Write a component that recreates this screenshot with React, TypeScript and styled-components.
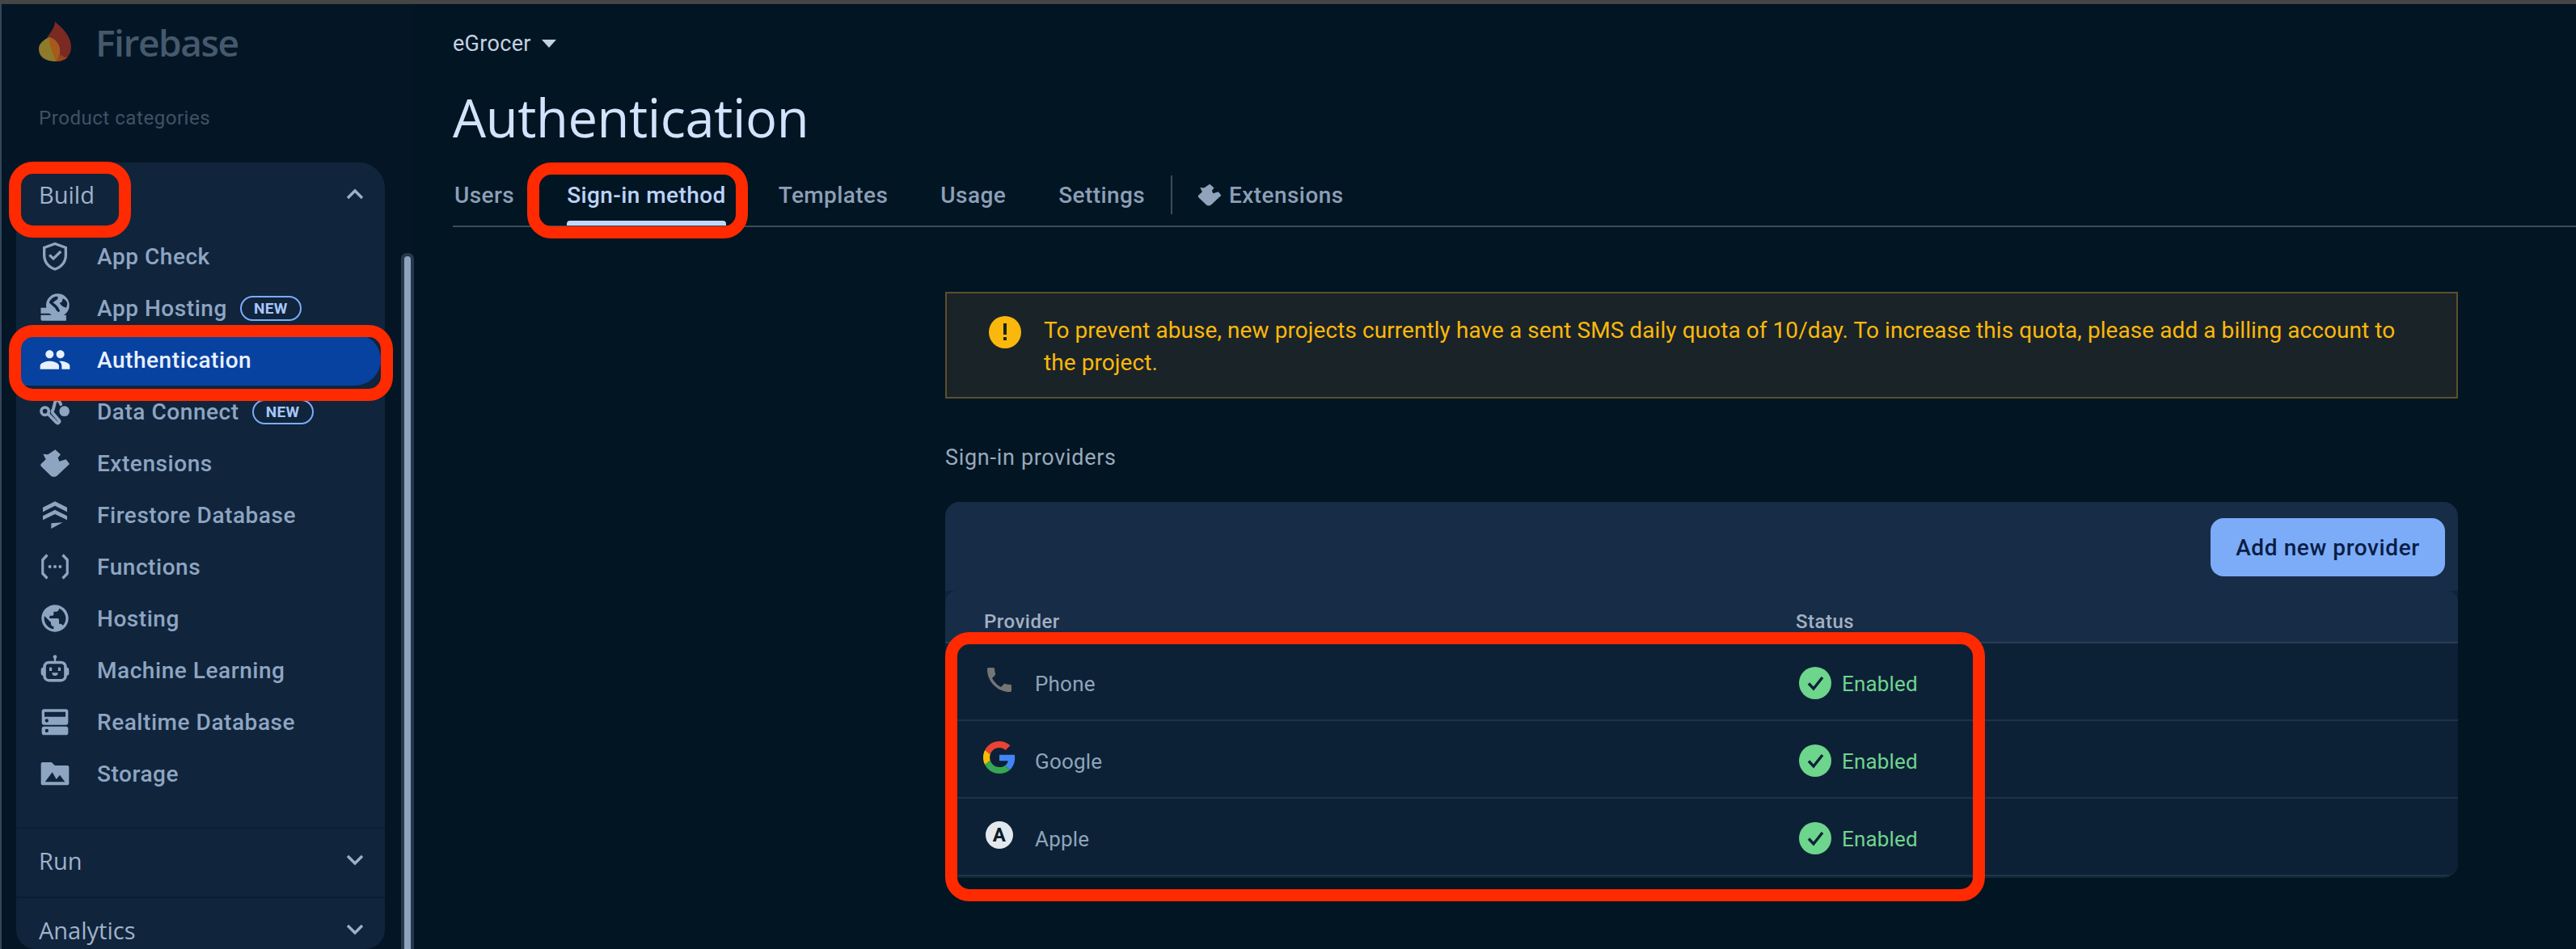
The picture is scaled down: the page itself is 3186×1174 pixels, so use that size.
import React from "react";
import styled, { createGlobalStyle } from "styled-components";

const Global = createGlobalStyle`
  html, body { margin: 0; padding: 0; background: #021523; }
  * { box-sizing: border-box; }
  #root { width: 3186px; height: 1174px; overflow: hidden; }
`;

const Page = styled.div`
  position: relative;
  width: 3186px;
  height: 1174px;
  overflow: hidden;
  display: flex;
  flex-direction: column;
  background: #021523;
  font-family: Roboto, "Liberation Sans", sans-serif;
`;
const TopStrip = styled.div`
  flex: 0 0 5px;
  background: #454545;
`;
const Shell = styled.div`
  flex: 1;
  display: flex;
  min-height: 0;
`;
const Sidebar = styled.aside`
  flex: 0 0 512px;
  display: flex;
  border-left: 2px solid #33475c;
  background: #041626;
`;
const SideColumn = styled.div`
  flex: 0 0 474px;
  padding-left: 18px;
  display: flex;
  flex-direction: column;
`;
const Brand = styled.div`
  height: 94px;
  padding-left: 28px;
  display: flex;
  align-items: center;
  gap: 30px;
`;
const BrandName = styled.span`
  font-family: "Open Sans", sans-serif;
  font-size: 46px;
  font-weight: 600;
  letter-spacing: -1.4px;
  color: #46596c;
`;
const CategoryLabel = styled.div`
  height: 102px;
  padding: 30px 0 0 28px;
  font-size: 24px;
  line-height: 34px;
  letter-spacing: 0.55px;
  color: #3f5266;
`;
const Panel = styled.nav`
  flex: 1;
  min-height: 0;
  background: #10243c;
  border-radius: 32px 32px 24px 24px;
  display: flex;
  flex-direction: column;
  overflow: hidden;
`;
const SectionHead = styled.div<{ $divided?: boolean }>`
  flex: 0 0 ${(p) => (p.$divided ? "86px" : "84px")};
  padding: 0 26px 6px 28px;
  display: flex;
  align-items: center;
  justify-content: space-between;
  font-family: "Open Sans", sans-serif;
  font-size: 29px;
  color: #a0b2ca;
  border-top: ${(p) => (p.$divided ? "2px solid #0b1d32" : "none")};
`;
const NavList = styled.div`
  flex: 0 0 auto;
  display: flex;
  flex-direction: column;
  padding-bottom: 34px;
`;
const NavRow = styled.div<{ $active?: boolean }>`
  height: 64px;
  margin-right: 5px;
  padding-left: 28px;
  display: flex;
  align-items: center;
  gap: 32px;
  border-radius: 0 32px 32px 0;
  background: ${(p) => (p.$active ? "#0842a0" : "transparent")};
  color: ${(p) => (p.$active ? "#e8f0fe" : "#8ea5c1")};
  font-size: 28px;
  font-weight: 500;
  letter-spacing: 0.55px;
  white-space: nowrap;
`;
const NavIcon = styled.svg`
  flex: 0 0 40px;
  width: 40px;
  height: 40px;
  fill: currentColor;
`;
const NewBadge = styled.span`
  margin-left: -16px;
  width: 76px;
  height: 31px;
  border: 2px solid #7cacf8;
  border-radius: 16px;
  display: flex;
  align-items: center;
  justify-content: center;
  font-size: 19px;
  font-weight: 700;
  letter-spacing: 0.3px;
  color: #a8c7fa;
`;
const Chevron = styled.svg`
  width: 22px;
  height: 14px;
  fill: none;
  stroke: #9cb0ca;
  stroke-width: 3.4;
`;
const ScrollRail = styled.div`
  flex: 0 0 36px;
  padding: 308px 0 0 20px;
  display: flex;
`;
const ScrollTrack = styled.div`
  width: 16px;
  background: #27384a;
  padding: 0 4px;
  border-radius: 7px 7px 0 0;
  display: flex;
`;
const ScrollThumb = styled.div`
  flex: 1;
  background: #8da2bd;
  border-radius: 4px 4px 0 0;
  margin-top: 4px;
`;
const Main = styled.main`
  flex: 1;
  min-width: 0;
  display: flex;
  flex-direction: column;
`;
const Header = styled.header`
  padding-left: 48px;
`;
const ProjectRow = styled.div`
  height: 98px;
  display: flex;
  align-items: center;
  gap: 13px;
  font-size: 27px;
  letter-spacing: 0.3px;
  color: #c4d1e0;
`;
const Caret = styled.span`
  width: 0;
  height: 0;
  border-left: 9px solid transparent;
  border-right: 9px solid transparent;
  border-top: 10px solid #c4d1e0;
`;
const Title = styled.h1`
  margin: 0;
  height: 90px;
  font-family: "Open Sans", sans-serif;
  font-size: 65px;
  font-weight: 400;
  line-height: 84px;
  letter-spacing: -0.4px;
  color: #d3e3fd;
`;
const TabBar = styled.div`
  height: 88px;
  padding: 10px 0 0 2px;
  display: flex;
  align-items: center;
  border-bottom: 2px solid #3c4b5a;
`;
const Tab = styled.div<{ $active?: boolean }>`
  position: relative;
  height: 76px;
  margin-right: 65px;
  display: flex;
  align-items: center;
  gap: 8px;
  font-size: 28px;
  font-weight: 500;
  letter-spacing: 0.42px;
  color: ${(p) => (p.$active ? "#bcd3f7" : "#8c9fb6")};
  &::after {
    content: "";
    display: ${(p) => (p.$active ? "block" : "none")};
    position: absolute;
    left: 0;
    right: 0;
    bottom: 0;
    height: 6px;
    border-radius: 4px 4px 0 0;
    background: #c2d7f8;
  }
`;
const TabDivider = styled.div`
  width: 2px;
  height: 48px;
  margin: 0 30px 0 -33px;
  background: #3c4b5a;
`;
const TabIcon = styled.svg`
  width: 32px;
  height: 32px;
  fill: #8fa3bb;
`;
const Content = styled.div`
  width: 1871px;
  margin: 80px 0 0 657px;
  display: flex;
  flex-direction: column;
`;
const Banner = styled.div`
  height: 132px;
  padding: 26px 50px 0 52px;
  display: flex;
  gap: 28px;
  background: #1a2328;
  border: 2px solid #5d4f2b;
  font-size: 28px;
  line-height: 40px;
  letter-spacing: 0.07px;
  color: #fbb80c;
`;
const WarnIcon = styled.svg`
  flex: 0 0 40px;
  width: 40px;
  height: 40px;
  margin-top: 2px;
`;
const Subhead = styled.div`
  height: 128px;
  padding-top: 17px;
  display: flex;
  align-items: center;
  font-size: 27px;
  letter-spacing: 0.7px;
  color: #9aa9bc;
`;
const Card = styled.section`
  border-radius: 18px;
  background: #10233a;
  overflow: hidden;
  box-shadow: 0 2px 0 #14283b;
`;
const CardBar = styled.div`
  height: 110px;
  padding: 20px 16px 0 0;
  display: flex;
  justify-content: flex-end;
  align-items: flex-start;
  background: #172c47;
`;
const AddButton = styled.button`
  width: 290px;
  height: 72px;
  padding: 0;
  border: 0;
  border-radius: 16px;
  background: #7cacf8;
  color: #0a1d45;
  font-family: Roboto, sans-serif;
  font-size: 28px;
  font-weight: 500;
  letter-spacing: 0.6px;
`;
const GridRow = styled.div`
  display: grid;
  grid-template-columns: 1004px 1fr;
  align-items: center;
`;
const HeadRow = styled(GridRow)`
  height: 65px;
  padding: 12px 0 0 48px;
  font-size: 24px;
  font-weight: 500;
  letter-spacing: 0.5px;
  color: #a3b1c2;
  background: #172c47;
  border-radius: 14px 14px 0 0;
  border-bottom: 2px solid #293d53;
`;
const BodyRow = styled(GridRow)`
  height: 96px;
  padding: 6px 0 0 47px;
  background: #0d2136;
  border-bottom: 2px solid #1f3348;
`;
const ProviderCell = styled.div`
  display: flex;
  align-items: center;
  gap: 24px;
  font-size: 26px;
  letter-spacing: 0.2px;
  color: #8ea4bb;
`;
const ProviderIconBox = styled.span`
  flex: 0 0 40px;
  width: 40px;
  height: 40px;
  display: flex;
  align-items: center;
  justify-content: center;
  margin-top: -10px;
`;
const ProviderSvg = styled.svg`
  width: 40px;
  height: 40px;
`;
const AppleBadge = styled.span`
  width: 34px;
  height: 34px;
  border-radius: 50%;
  background: #e3e8ee;
  color: #0b1b2b;
  font-size: 24px;
  font-weight: 700;
  line-height: 34px;
  text-align: center;
`;
const StatusCell = styled.div`
  display: flex;
  align-items: center;
  gap: 13px;
  font-size: 26px;
  letter-spacing: 0.15px;
  color: #6fd48e;
`;
const CheckBadge = styled.svg`
  flex: 0 0 40px;
  width: 40px;
  height: 40px;
  margin: -2px 0 0 5px;
`;
const Annotation = styled.div<{ $x: number; $y: number; $w: number; $h: number; $r: number }>`
  position: absolute;
  left: ${(p) => p.$x}px;
  top: ${(p) => p.$y}px;
  width: ${(p) => p.$w}px;
  height: ${(p) => p.$h}px;
  border: 15px solid #ff2a00;
  border-radius: ${(p) => p.$r}px;
  pointer-events: none;
`;

const Flame = () => (
  <svg width="40" height="50" viewBox="0 0 40 50">
    <path d="M20 0C29 7 40 18 40 31 40 42 32 49 22 49 10 49 6 36 8 25 11 15 19 11 20 0Z" fill="#7a2a22" />
    <path d="M13 19C21 21 27 29 26 38 25 44 23 47 22 49 10 49 0 45 0 33 0 27 6 22 13 19Z" fill="#8d7a2a" />
    <path d="M13 19C21 21 27 29 26 38 25 43 24 46 21 49 19 40 12 30 13 19Z" fill="#a8591c" />
    <path d="M21 49C24 46 26 43 27 40 30 44 33 45 36 43 33 47 27 49 21 49Z" fill="#96481c" />
  </svg>
);

const puzzle = "M3.2 5.2L6.8 5.6 12.2 2l4 3.6-2 2.4 1 2.6 5-1.4 2.6 3.4-9.4 8.8Q11 22.8 9 21.4L1.6 14.2Q1 13.4 1.6 12.6L5.2 9.2Z";

const ic = {
  check: (
    <>
      <path fillRule="evenodd" d="M12 1.6l9 3.3v6.4c0 5.4-3.7 10.1-9 11.3-5.3-1.2-9-5.9-9-11.3V4.9l9-3.3zm0 2.2L5 6.3v5c0 4.3 2.9 8.1 7 9.2 4.1-1.1 7-4.9 7-9.2v-5l-7-2.5z" />
      <path d="M10.8 15.2l-3.6-3.5 1.4-1.4 2.2 2.1 4.8-4.7 1.4 1.4-6.2 6.1z" />
    </>
  ),
  appHosting: (
    <>
      <path fillRule="evenodd" d="M14 1.4a8.6 8.6 0 1 1 0 17.2 8.6 8.6 0 0 1 0-17.2zm-1 2.1c-2.2.3-4.6 2-5.3 4.6l4.5 4 .8 1.7 1.7 1.4 1-1-1.3-2.6-1.6-1.8L10.5 8l2-1.6 1.4-.9.3-1.9-1.2-.1zm4.8 1.4-.6 2.4-1.8 1.3 2.2 2.2 2.7 1c.7-1.2.9-2.5.7-3.8-.3-1.2-1.7-2.4-3.2-3.1z" />
      <path d="M1.5 11.8h4.6c.5 2 1.3 3 2.7 4.2H1.5v-4.2zm0 5.5h18.8v4.1H2.5a1 1 0 0 1-1-1v-3.1z" />
    </>
  ),
  auth: (
    <path d="M16 11c1.66 0 2.99-1.34 2.99-3S17.66 5 16 5c-1.66 0-3 1.34-3 3s1.34 3 3 3zm-8 0c1.66 0 2.99-1.34 2.99-3S9.66 5 8 5C6.34 5 5 6.34 5 8s1.34 3 3 3zm0 2c-2.33 0-7 1.17-7 3.5V19h14v-2.5c0-2.33-4.67-3.5-7-3.5zm8 0c-.29 0-.62.02-.97.05 1.16.84 1.97 1.97 1.97 3.45V19h6v-2.5c0-2.33-4.67-3.5-7-3.5z" />
  ),
  dataConnect: (
    <>
      <path fill="none" stroke="currentColor" strokeWidth="2.3" strokeLinecap="round" d="M6.8 13.8l6.2 6.4c1.2 1.2 3-.4 1.9-1.7l-4.4-5.2c-.9-1-.5-2 .2-2.8l1.4-5.6c.5-1.5 2.5-1.4 3.2-.2l1 2" />
      <circle cx="4.6" cy="11.8" r="2.8" fill="none" stroke="currentColor" strokeWidth="2.2" />
      <circle cx="19" cy="11.8" r="3.8" />
    </>
  ),
  extensions: <path d={puzzle} />,
  firestore: (
    <>
      <path d="M12 2l9 4.4v3.3L12 5.3 3 9.7V6.4L12 2z" />
      <path d="M12 8.3l9 4.4v3L12 11.4 3 15.7v-3L12 8.3z" />
      <path d="M9.2 18.2l8.6-.7-8.6 4.7v-4z" />
    </>
  ),
  functions: (
    <>
      <path d="M5.6 2.6L7 4.1 3.8 7.5v9l3.2 3.4-1.4 1.5L1.9 17.5V6.5l3.7-3.9zM18.4 2.6L17 4.1l3.2 3.4v9L17 19.9l1.4 1.5 3.7-3.9V6.5l-3.7-3.9z" />
      <circle cx="8.2" cy="12" r="1.2" />
      <circle cx="12" cy="12" r="1.2" />
      <circle cx="15.8" cy="12" r="1.2" />
    </>
  ),
  hosting: (
    <path d="M12 2C6.48 2 2 6.48 2 12s4.48 10 10 10 10-4.48 10-10S17.52 2 12 2zm-1 17.93c-3.95-.49-7-3.85-7-7.93 0-.62.08-1.21.21-1.79L9 15v1c0 1.1.9 2 2 2v1.93zm6.9-2.54c-.26-.81-1-1.39-1.9-1.39h-1v-3c0-.55-.45-1-1-1H8v-2h2c.55 0 1-.45 1-1V7h2c1.1 0 2-.9 2-2v-.41c2.93 1.19 5 4.06 5 7.41 0 2.08-.8 3.97-2.1 5.39z" />
  ),
  robot: (
    <>
      <circle cx="12" cy="2.2" r="1.4" />
      <rect x="11.3" y="2.5" width="1.4" height="3.2" />
      <path fillRule="evenodd" d="M7.5 5.2h9a4.4 4.4 0 0 1 4.4 4.4v.4H21a1.5 1.5 0 0 1 1.4 1.5v3a1.5 1.5 0 0 1-1.4 1.5h-.1v.3a4.4 4.4 0 0 1-4.4 4.4h-9a4.4 4.4 0 0 1-4.4-4.4V16H3a1.5 1.5 0 0 1-1.4-1.5v-3A1.5 1.5 0 0 1 3 10h.1v-.4a4.4 4.4 0 0 1 4.4-4.4zm0 2.2a2.2 2.2 0 0 0-2.2 2.2v6.8a2.2 2.2 0 0 0 2.2 2.2h9a2.2 2.2 0 0 0 2.2-2.2V9.6a2.2 2.2 0 0 0-2.2-2.2h-9z" />
      <rect x="7.8" y="10" width="1.9" height="2.6" />
      <rect x="14.3" y="10" width="1.9" height="2.6" />
      <path d="M9.8 14h4.4a2.2 2.2 0 0 1-4.4 0z" />
    </>
  ),
  realtime: (
    <path fillRule="evenodd" d="M3.8 2.6h16.4c.9 0 1.6.7 1.6 1.6v8.4c0 .9-.7 1.6-1.6 1.6H3.8c-.9 0-1.6-.7-1.6-1.6V4.2c0-.9.7-1.6 1.6-1.6zm.4 2v3.6h15.6V4.6H4.2zm1.7 5.2a1.3 1.3 0 1 0 0 2.6 1.3 1.3 0 0 0 0-2.6zM3.8 15.4h16.4c.9 0 1.6.7 1.6 1.6v3.2c0 .9-.7 1.6-1.6 1.6H3.8c-.9 0-1.6-.7-1.6-1.6V17c0-.9.7-1.6 1.6-1.6zm2.1 1.9a1.3 1.3 0 1 0 0 2.6 1.3 1.3 0 0 0 0-2.6z" />
  ),
  storage: (
    <path fillRule="evenodd" d="M2.8 3.6h6.6L12 6h9.2c.7 0 1.2.5 1.2 1.2v12.2c0 .7-.5 1.2-1.2 1.2H2.8c-.7 0-1.2-.5-1.2-1.2V4.8c0-.7.5-1.2 1.2-1.2zm7.2 7.4l-5.4 7.2h14.8l-3.8-5.2-2.6 3.2L10 11z" />
  ),
};

const rows: { label: string; icon: keyof typeof ic; isNew?: boolean; active?: boolean }[] = [
  { label: "App Check", icon: "check" },
  { label: "App Hosting", icon: "appHosting", isNew: true },
  { label: "Authentication", icon: "auth", active: true },
  { label: "Data Connect", icon: "dataConnect", isNew: true },
  { label: "Extensions", icon: "extensions" },
  { label: "Firestore Database", icon: "firestore" },
  { label: "Functions", icon: "functions" },
  { label: "Hosting", icon: "hosting" },
  { label: "Machine Learning", icon: "robot" },
  { label: "Realtime Database", icon: "realtime" },
  { label: "Storage", icon: "storage" },
];

const ChevronUp = () => (
  <Chevron viewBox="0 0 22 14">
    <path d="M2 12l9-9 9 9" />
  </Chevron>
);
const ChevronDown = () => (
  <Chevron viewBox="0 0 22 14">
    <path d="M2 2l9 9 9-9" />
  </Chevron>
);

const Enabled = () => (
  <StatusCell>
    <CheckBadge viewBox="0 0 40 40">
      <circle cx="20" cy="20" r="20" fill="#6dd58c" />
      <path d="M12 20.5l6 6.5 11-14" fill="none" stroke="#0d2136" strokeWidth="3.4" />
    </CheckBadge>
    Enabled
  </StatusCell>
);

export default function App() {
  return (
    <Page>
      <Global />
      <TopStrip />
      <Shell>
        <Sidebar>
          <SideColumn>
            <Brand>
              <Flame />
              <BrandName>Firebase</BrandName>
            </Brand>
            <CategoryLabel>Product categories</CategoryLabel>
            <Panel>
              <SectionHead>
                Build
                <ChevronUp />
              </SectionHead>
              <NavList>
                {rows.map((r) => (
                  <NavRow key={r.label} $active={r.active}>
                    <NavIcon viewBox="0 0 24 24">{ic[r.icon]}</NavIcon>
                    {r.label}
                    {r.isNew && <NewBadge>NEW</NewBadge>}
                  </NavRow>
                ))}
              </NavList>
              <SectionHead $divided>
                Run
                <ChevronDown />
              </SectionHead>
              <SectionHead $divided>
                Analytics
                <ChevronDown />
              </SectionHead>
            </Panel>
          </SideColumn>
          <ScrollRail>
            <ScrollTrack>
              <ScrollThumb />
            </ScrollTrack>
          </ScrollRail>
        </Sidebar>
        <Main>
          <Header>
            <ProjectRow>
              eGrocer
              <Caret />
            </ProjectRow>
            <Title>Authentication</Title>
            <TabBar>
              <Tab>Users</Tab>
              <Tab $active>Sign-in method</Tab>
              <Tab>Templates</Tab>
              <Tab>Usage</Tab>
              <Tab>Settings</Tab>
              <TabDivider />
              <Tab>
                <TabIcon viewBox="0 0 24 24">{ic.extensions}</TabIcon>
                Extensions
              </Tab>
            </TabBar>
          </Header>
          <Content>
            <Banner>
              <WarnIcon viewBox="0 0 40 40">
                <circle cx="20" cy="20" r="20" fill="#fbb80c" />
                <rect x="18" y="9" width="4" height="14" fill="#1a2328" />
                <rect x="18" y="26" width="4" height="4" fill="#1a2328" />
              </WarnIcon>
              <span>
                To prevent abuse, new projects currently have a sent SMS daily quota of 10/day. To increase this quota, please add a billing account to the project.
              </span>
            </Banner>
            <Subhead>Sign-in providers</Subhead>
            <Card>
              <CardBar>
                <AddButton>Add new provider</AddButton>
              </CardBar>
              <HeadRow>
                <span>Provider</span>
                <span>Status</span>
              </HeadRow>
              <BodyRow>
                <ProviderCell>
                  <ProviderIconBox>
                    <ProviderSvg viewBox="0 0 24 24">
                      <path fill="#757575" d="M6.62 10.79c1.44 2.83 3.76 5.14 6.59 6.59l2.2-2.2c.27-.27.67-.36 1.02-.24 1.12.37 2.33.57 3.57.57.55 0 1 .45 1 1V20c0 .55-.45 1-1 1-9.39 0-17-7.61-17-17 0-.55.45-1 1-1h3.5c.55 0 1 .45 1 1 0 1.25.2 2.45.57 3.57.11.35.03.74-.25 1.02l-2.2 2.2z" />
                    </ProviderSvg>
                  </ProviderIconBox>
                  Phone
                </ProviderCell>
                <Enabled />
              </BodyRow>
              <BodyRow>
                <ProviderCell>
                  <ProviderIconBox>
                    <ProviderSvg viewBox="0 0 48 48">
                      <path fill="#EA4335" d="M24 9.5c3.54 0 6.71 1.22 9.21 3.6l6.85-6.85C35.9 2.38 30.47 0 24 0 14.62 0 6.51 5.38 2.56 13.22l7.98 6.19C12.43 13.72 17.74 9.5 24 9.5z" />
                      <path fill="#4285F4" d="M46.98 24.55c0-1.57-.15-3.09-.38-4.55H24v9.02h12.94c-.58 2.96-2.26 5.48-4.78 7.18l7.73 6c4.51-4.18 7.09-10.36 7.09-17.65z" />
                      <path fill="#FBBC05" d="M10.53 28.59c-.5-1.45-.78-2.99-.78-4.59s.27-3.14.78-4.59l-7.98-6.19C.92 16.46 0 20.12 0 24c0 3.88.92 7.54 2.56 10.78l7.97-6.19z" />
                      <path fill="#34A853" d="M24 48c6.48 0 11.93-2.13 15.89-5.81l-7.73-6c-2.15 1.45-4.92 2.3-8.16 2.3-6.26 0-11.57-4.22-13.47-9.91l-7.98 6.19C6.51 42.62 14.62 48 24 48z" />
                    </ProviderSvg>
                  </ProviderIconBox>
                  Google
                </ProviderCell>
                <Enabled />
              </BodyRow>
              <BodyRow>
                <ProviderCell>
                  <ProviderIconBox>
                    <AppleBadge>A</AppleBadge>
                  </ProviderIconBox>
                  Apple
                </ProviderCell>
                <Enabled />
              </BodyRow>
            </Card>
          </Content>
        </Main>
      </Shell>
      <Annotation $x={11} $y={200} $w={151} $h={94} $r={30} />
      <Annotation $x={11} $y={402} $w={475} $h={94} $r={30} />
      <Annotation $x={652} $y={201} $w={273} $h={94} $r={30} />
      <Annotation $x={1169} $y={782} $w={1286} $h={333} $r={30} />
    </Page>
  );
}
